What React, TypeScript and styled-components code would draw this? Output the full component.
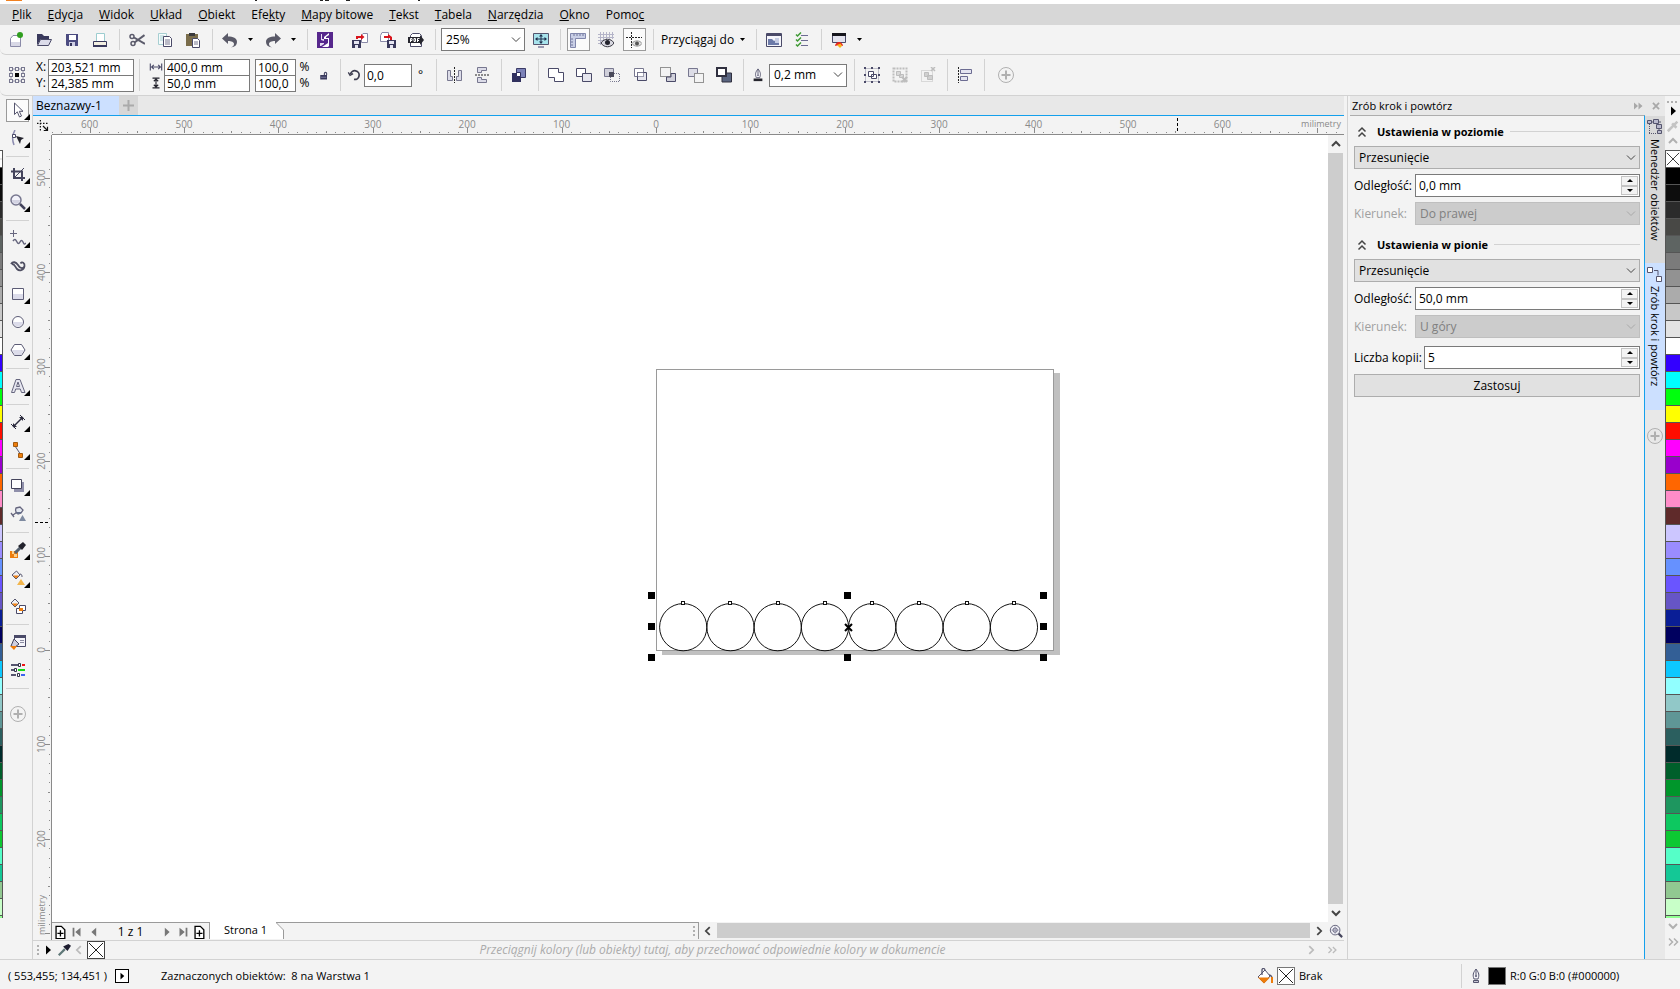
import React, { useId } from "react";
import styled, { createGlobalStyle, css } from "styled-components";

/* ---------- theme values ---------- */
const ink = "#4a4a68";
const line = "#d2d2d2";
const accent = "#14a0ec";
const orange = "#ee7d0c";
const bg = "#f3f3f3";

const Global = createGlobalStyle`
  *, *::before, *::after { box-sizing: border-box; }
  body { margin: 0; background: ${bg}; }
  body, button, input, select {
    font-family: "Open Sans", "Noto Sans", sans-serif;
    font-size: 12px;
    line-height: 16px;
    color: #000;
  }
  button, input, select { margin: 0; border-radius: 0; }
  button { padding: 0; border: 0; background: none; }
  svg { display: block; flex: none; }
`;

/* ---------- icons ---------- */
const Grey = ({ children }: { children: React.ReactNode }) => <g stroke="#bdbdbd" fill="none">{children}</g>;

const icons: Record<string, React.ReactNode> = {
  new: (
    <>
      <path d="M2.500 6.500 5 3.500h7.500V14.500h-10z" fill="#fff" stroke="#8a8aa8" />
      <path d="M3 10h9v4H3z" fill="#d8d8e6" />
      <circle cx="12" cy="3" r="3" fill="#2f9e1e" />
    </>
  ),
  open: (
    <>
      <path d="M1 13V2h5l2 2h5v3H5z" fill="#39395c" />
      <path d="M4.500 7.500h11L12.500 13.500h-11z" fill="#dcdcea" stroke={ink} />
    </>
  ),
  save: (
    <>
      <path d="M2 2h12v12H3l-1-1z" fill="#4b4b80" />
      <path d="M5 3h7v5H5z" fill="#fff" />
      <path d="M5 10h6v4H5z" fill="#cfcfe4" />
      <path d="M6 11h2v3H6z" fill="#33335a" />
    </>
  ),
  print: (
    <>
      <path d="M4.500 1.500h8v8h-8z" fill="#fff" stroke="#9ccdd0" />
      <path d="M1.500 9.500h13v4h-13z" fill="#f3f0e2" stroke="#39395c" />
      <path d="M1 13h14v2H1z" fill="#39395c" />
    </>
  ),
  cut: (
    <g fill="none" stroke="#5c5c6c">
      <circle cx="3" cy="4.500" r="2" strokeWidth="1.500" />
      <circle cx="4" cy="11.500" r="2" strokeWidth="1.500" />
      <path d="M5 5.500 16 12M5.500 10.500 15.500 3" strokeWidth="2" />
    </g>
  ),
  copy: (
    <>
      <path d="M1.500 1.500h8v11h-8z" fill="#f4fbfb" stroke="#a7cfd2" />
      <path d="M3 4h4M3 6h3M3 8h3" stroke="#a7cfd2" />
      <path d="M6.500 4.500h6l2 2v8h-8z" fill="#fff" stroke={ink} />
      <path d="M8 8h5M8 10h5M8 12h5" stroke="#77778f" />
    </>
  ),
  paste: (
    <>
      <path d="M1 2h12v12H1z" fill="#7a6d4b" />
      <path d="M4 1h6v3H4z" fill="#39393c" />
      <path d="M7.500 6.500h5l2 2v7h-7z" fill="#fff" stroke={ink} />
      <path d="M9 10h4M9 12h4" stroke="#77778f" />
    </>
  ),
  undo: <path d="M0 6.500 6 1v3.500c5 0 9 1.500 9 5.500 0 3-2 5-6 5.500 2-1 3-2 3-3.500 0-2-2.500-3-6-3V12z" fill="#5a5a68" />,
  redo: <path d="M16 6.500 10 1v3.500c-5 0-9 1.500-9 5.500 0 3 2 5 6 5.500-2-1-3-2-3-3.500 0-2 2.500-3 6-3V12z" fill="#5a5a68" />,
  connect: (
    <>
      <path d="M0 0h16v16H0z" fill="#56278c" />
      <path d="M12 1 7 5v2h4v4l-6 4h6l1-1V6H9V5l3-2z" fill="#fff" />
      <path d="M4 2h1v5h2v2L4 8zM3 11h4v1L4 14H3z" fill="#e6dcf2" />
    </>
  ),
  import: (
    <>
      <path d="M9.500 3.500 11 1.500h4.500v9h-6z" fill="#fff" stroke="#8a8aa8" />
      <path d="M0 8h9v8H0z" fill="#39395c" />
      <path d="M2 9h5v3H2zM3 13h3v3H3z" fill="#e6e6f2" />
      <path d="M4 7V4h5V2l3.500 3L9 8V6H6v1z" fill="#d8141c" />
    </>
  ),
  export: (
    <>
      <path d="M.5 3.500 2 .5h6.500v9h-8z" fill="#fff" stroke="#8a8aa8" />
      <path d="M7 8h9v8H7z" fill="#39395c" />
      <path d="M9 9h5v3H9zM10 13h3v3h-3z" fill="#e6e6f2" />
      <path d="M4 4h4V2l4 3v3h-2V6H4z" fill="#d8141c" />
    </>
  ),
  pdf: (
    <>
      <path d="M2.500 14.500v-11l2-2h7l2 2v11z" fill="#fff" stroke={ink} />
      <path d="M0 5h12V3l4 5-4 5v-2H0z" fill="#26262e" />
      <path d="M2.500 10V6.500h1.500v2H2.500M6 6.500v3h1.500v-3zM9.500 10V6.500h2M9.500 8.500h1.500" fill="none" stroke="#fff" />
    </>
  ),
  fullscreen: (
    <>
      <path d="M.5 1.500h15v11H.5z" fill="#a7e3ec" stroke="#55556e" />
      <path d="M5 15h6" stroke="#9a9ab2" strokeWidth="2" />
      <path d="M8 3v8M3 7h10" stroke="#1e2f4c" strokeWidth="1" />
      <path d="M8 2 6 4.500h4zM8 12 6 9.500h4zM2 7l2.500-2v4zM14 7l-2.500-2v4z" fill="#1e2f4c" />
    </>
  ),
  rulers: (
    <>
      <path d="M.5 1.500h15v5h-10v9h-5z" fill="#c9cfe6" stroke="#8187ac" />
      <path d="M4 2v2M7 2v2M10 2v2M13 2v2M1 7h2M1 10h2M1 13h2" stroke="#6e7499" />
    </>
  ),
  grid: (
    <>
      <path d="M0 2.500h16M0 5.500h16M0 8.500h5M0 11.500h4M2.500 0v13M5.500 0v9M8.500 0v7M11.500 0v7M14.500 0v7" stroke="#b4b4c8" />
      <path d="M3 11c3-5 10-5 13 0-3 5-10 5-13 0z" fill="#d8d8e0" stroke="#33333f" />
      <circle cx="9.500" cy="10.500" r="2.500" fill="#22222c" />
    </>
  ),
  guides: (
    <>
      <path d="M5.500 0v16M0 5.500h16" stroke="#222" strokeDasharray="2 1" />
      <path d="M6 11.500c2-3.500 8-3.500 10 0-2 3.500-8 3.500-10 0z" fill="#e0e0e0" stroke="#999" />
      <circle cx="11" cy="11.500" r="2" fill="#555" />
    </>
  ),
  launcher: (
    <>
      <path d="M.5 1.500h15v13H.5z" fill="#f5f5fb" stroke={ink} />
      <path d="M1 1h14v3H1z" fill={ink} />
      <path d="M2 7h4l2 2 5-3v7H2z" fill="#6c7aa8" />
      <path d="M9 6h4v5H9z" fill="#c6cde4" />
    </>
  ),
  options: (
    <>
      <path d="M7 3.500h7M7 8.500h7M7 13.500h7" stroke="#6c6c92" />
      <path d="m2 2.500 1.500 1.500L7 .5M2 7.500 3.500 9 7 5.500M2 12.500 3.500 14 7 10.500" fill="none" stroke="#3f9a34" strokeWidth="1.500" />
    </>
  ),
  welcome: (
    <>
      <path d="M1.500 1.500h13v9h-13z" fill="#e3e3ee" stroke={ink} />
      <path d="M1 1h14v3H1z" fill="#15151c" />
      <path d="M4 14c0-2 2-4 4-4s4 2 4 4l-4-1z" fill="#e8261a" />
      <path d="M6 13 9.500 11.500 11 14l-2 2z" fill="#f8b51c" />
    </>
  ),
  origin: (
    <>
      <path d="M3 2h10M3 14h10M2 3v10M14 3v10" stroke="#8c8ca2" />
      <g fill={bg} stroke="#77778f">
        {[0.5, 6.5, 12.5].map((x) => [0.5, 6.5, 12.5].map((y) => <rect key={`${x}-${y}`} x={x} y={y} width="3" height="3" />))}
      </g>
      <path d="M6 6h4v4H6z" fill="#000" />
    </>
  ),
  lock: (
    <>
      <path d="M3 8h9v6H3z" fill="#39395c" />
      <path d="M8.500 8V6c0-2 3-2 3 0v2" fill="none" stroke={ink} strokeWidth="1.500" />
      <path d="M4 11h7" stroke="#8c8cb0" />
    </>
  ),
  rotate: (
    <g fill="none" stroke="#3d3d50" strokeWidth="2">
      <path d="M4 7a5 5 0 1 1 4 6" />
      <path d="m1.500 5 2 3.500L7 6.500" strokeWidth="1.500" />
    </g>
  ),
  width: <path d="M1.500 4v8M14.500 4v8M3 8h10M5.500 5.500 3 8l2.500 2.500M10.500 5.500 13 8l-2.500 2.500" fill="none" stroke={ink} strokeWidth="1.300" />,
  height: <path d="M4 2.500h8M4 13.500h8M8 3v10M5.500 6 8 3.500 10.500 6M5.500 10 8 12.500l2.500-2.500" fill="none" stroke="#22222c" strokeWidth="1.300" />,
  mirrorH: (
    <>
      <path d="M1.500 3.500h3v6h2v4h-5z" fill="#dcdce8" stroke="#77778f" />
      <path d="M15.500 3.500h-3v6h-2v4h5z" fill="#dcdce8" stroke="#77778f" />
      <path d="M8.500 0v16" stroke="#222" strokeDasharray="2 1" />
    </>
  ),
  mirrorV: (
    <>
      <path d="M3.500 .5h9v3h-5v2h-4zM3.500 15.500h9v-3h-5v-2h-4z" fill="#dcdce8" stroke="#77778f" />
      <path d="M1 8h15" stroke="#222" strokeDasharray="2 1" />
    </>
  ),
  order: (
    <>
      <path d="M5.500 1.500h9v9h-9z" fill="#7c82b8" stroke="#3a3a66" />
      <path d="M1 6h9v9H1z" fill="#30305e" />
      <path d="M5.500 5.500h4v4h-4z" fill="#fff" stroke="#30305e" />
    </>
  ),
  weld: <path d="M.5 1.500h10v4h5v9h-9v-4h-6z" fill="#fff" stroke={ink} />,
  trim: (
    <>
      <path d="M.5 1.500h9v8h-9z" fill="#fff" stroke={ink} />
      <path d="M6.500 6.500h9v8h-9z" fill="#e6e6ee" stroke={ink} />
    </>
  ),
  intersect: (
    <>
      <path d="M.5 1.500h9v8h-9z" fill="#d0d0da" stroke="#77778f" />
      <path d="M5 5h5v5H5z" fill="#4a4a5a" />
      <path d="M10 6.500h5.500v8h-9V10" fill="none" stroke="#77778f" strokeDasharray="1 1" />
    </>
  ),
  simplify: (
    <>
      <path d="M2.500 1.500h9v8h-9z" fill="#fff" stroke="#77778f" />
      <path d="M5.500 5.500h9v8h-9z" fill="#e6e6ee" stroke={ink} />
      <path d="M5.500 5.500h6v4h-6z" fill="#fff" stroke={ink} strokeDasharray="1 1" />
    </>
  ),
  frontBack: (
    <>
      <path d="M.5 .5h10v9H.5z" fill="none" stroke="#333" strokeDasharray="1 1" />
      <path d="M11 6.500h4.500v8h-9V10H11z" fill="#d0d0da" stroke={ink} />
    </>
  ),
  backFront: (
    <>
      <path d="M9.500 6V1.500h-9v8H6" fill="#dcdce6" stroke="#77778f" />
      <path d="M6.500 6.500h9v9h-9z" fill={bg} stroke="#333" strokeDasharray="1 1" />
    </>
  ),
  boundary: (
    <>
      <path d="M6 6h9.500v9H6z" fill="#5a6580" stroke="#30303f" />
      <path d="M1 1h9v8H1z" fill="#fff" stroke="#30303f" strokeWidth="2" />
    </>
  ),
  pen: (
    <>
      <path d="M8 1c3 4 3.500 6 2 10H6C4.500 7 5 5 8 1z" fill="#f4f4f8" stroke="#55556e" />
      <path d="M8 2v5" stroke="#55556e" />
      <circle cx="8" cy="8" r="1" fill="#55556e" />
      <path d="M3 12h10v3H3z" fill="#26262e" />
    </>
  ),
  nib: (
    <>
      <path d="M8 1c3 4 3.500 6 2 10H6C4.500 7 5 5 8 1z" fill="#f4f4f8" stroke="#55556e" />
      <path d="M8 2v5" stroke="#55556e" />
      <circle cx="8" cy="8" r="1" fill="#55556e" />
      <path d="M5.500 12.500h5v2h-5z" fill="#c9c9d6" stroke="#55556e" />
    </>
  ),
  group: (
    <>
      <path d="M1.500 1.500h13v13h-13z" fill="none" stroke="#8c8ca2" strokeDasharray="1 1" />
      <path d="M0 0h2v2H0zM14 0h2v2h-2zM0 14h2v2H0zM14 14h2v2h-2zM7 0h2v2H7zM7 14h2v2H7zM0 7h2v2H0zM14 7h2v2h-2z" fill={ink} />
      <path d="M4.500 4.500h5v5h-5zM7.500 7.500h5v4h-5z" fill="#fff" stroke={ink} />
    </>
  ),
  ungroup: (
    <Grey>
      <path d="M1.500 1.500h13v13h-13z" strokeDasharray="2 1" strokeWidth="2" />
      <path d="M4.500 4.500h4v4h-4zM7.500 7.500h4v3h-4z" fill="#d8d8d8" />
      <path d="m10 10 5 5m0-5-5 5" strokeWidth="2" />
    </Grey>
  ),
  ungroupAll: (
    <Grey>
      <path d="M1.500 3.500h11v11h-11z" strokeDasharray="1 1" />
      <path d="M4.500 5.500h4v4h-4zM7.500 8.500h5v4h-5z" fill="#d0d0d0" />
      <path d="m11 0 4 4m0-4-4 4" strokeWidth="1.500" />
    </Grey>
  ),
  align: (
    <>
      <path d="M1.500 0v16" stroke="#222" strokeDasharray="2 1" />
      <path d="M3.500 2.500h11v4h-11zM3.500 9.500h7v4h-7z" fill="#e4e4f0" stroke="#6c6c92" />
    </>
  ),
  pick: <path d="M4.500 1v11.500l2.800-2.700L9.500 15l2-1-2.200-4.700H13z" fill="#fff" stroke="#55556e" />,
  shape: (
    <>
      <path d="M5 0C2 5 2 10 4 15" fill="none" stroke="#8c8cb0" strokeWidth="1.500" />
      <path d="M2.500 4.500h3v3h-3z" fill="#fff" stroke={ink} />
      <path d="m6 6 8 2-3 2-1 4z" fill="#22222c" />
    </>
  ),
  crop: (
    <g fill="none" stroke="#44445c" strokeWidth="2">
      <path d="M4 2v10h11M1 5.500h11V15" />
      <path d="m14 2-9 9" strokeWidth="1" />
    </g>
  ),
  zoom: (
    <>
      <circle cx="6" cy="6" r="5" fill="#f2f2fa" stroke="#77778f" strokeWidth="1.500" />
      <path d="M2 6h8c0 5-8 5-8 0z" fill="#d3d3e2" />
      <path d="m10 10 5 5" stroke="#44445c" strokeWidth="2.500" />
    </>
  ),
  freehand: (
    <g fill="none" stroke="#66667e">
      <path d="M3.500 0v7M0 3.500h7" />
      <path d="M3 11c2-3 3-1 4 1s2 2 3 0 2-2 3 0 1 3 3 1" strokeWidth="1.500" />
    </g>
  ),
  artistic: (
    <path
      d="M1 6c2-3 5-2 7 1 2 4 6 4 6.500 1C15 5 12 3 10.500 5.500M2 6c3 0 3 3 5 5s7 2 7.500-3"
      fill="none"
      stroke="#4f4f62"
      strokeWidth="1.800"
    />
  ),
  rect: (
    <>
      <path d="M2.500 2.500h11v11h-11z" fill="#fff" stroke="#5c5c76" />
      <path d="M3 8h10v5H3z" fill="#dcdcea" />
    </>
  ),
  ellipse: (
    <>
      <circle cx="8" cy="8" r="5.500" fill="#fff" stroke="#5c5c76" />
      <path d="M3 8h10c-1 6-9 6-10 0z" fill="#dcdcea" />
    </>
  ),
  polygon: (
    <>
      <path d="M4.500 2.500h7l3.500 5.500-3.500 5.500h-7L1 8z" fill="#fff" stroke="#5c5c76" />
      <path d="M2 8h12l-3 5H5z" fill="#dcdcea" />
    </>
  ),
  text: <path d="M1.500 14.500 6 1.500h4l5 13h-3.500L10.300 11H5.700L4.500 14.500zM6.500 8.500h3L8 4z" fill="#e6e6f0" stroke="#66667e" />,
  dimension: (
    <g stroke="#2c2c3e" fill="#2c2c3e">
      <path d="m3 13 10-10" strokeWidth="1.500" />
      <path d="m1 10 5 5M10 1l5 5" />
      <path d="M3 13V9l4 4zM13 3v4L9 3z" stroke="none" />
    </g>
  ),
  connector: (
    <>
      <path d="m5 4 6 9" stroke="#55556e" />
      <path d="M3.500 .5h4v4h-4zM8.500 11.500h4v4h-4z" fill={orange} stroke="#a05a10" />
    </>
  ),
  shadow: (
    <>
      <path d="M4 4h10v10H4z" fill="#8f8faa" />
      <path d="M1.500 1.500h10v9h-10z" fill="#fff" stroke="#44445c" />
    </>
  ),
  transparency: (
    <>
      <path d="m6 2 4-1 3 3-2 3-3 1c-2-1-3-3-2-6z" fill="#e4e8f0" stroke="#66667e" strokeWidth="1.300" />
      <path d="M6 6h6l-2 2H7z" fill="#66708c" />
      <path d="M6.500 6.500 3 9M1 7l3 4" stroke="#66667e" strokeWidth="1.300" />
      <path d="M9 15 12.500 9l3.500 6z" fill="#7e8aa0" />
    </>
  ),
  eyedropper: (
    <>
      <path d="M0 9h8v7H0z" fill={orange} />
      <path d="M2 9h2v3H2zM4 12h3v3H4z" fill="#fbd08c" />
      <path d="m5 11 6-6" stroke="#55606e" strokeWidth="3" />
      <path d="m8 4 4 4 4-5-3-3z" fill="#22222c" />
    </>
  ),
  fillTool: (
    <>
      <path d="M2 5 6.500 1 10 5 6 9z" fill="#f0f0f4" stroke="#55556e" />
      <path d="M3 5.500h6L6 8.500z" fill={orange} />
      <path d="M10 4c2 0 2 2 2 3" fill="none" stroke="#55556e" />
      <path d="M7 15 11 9l4 6z" fill="#f2b54c" />
    </>
  ),
  smartFill: (
    <>
      <path d="M1 5 5 1l4 4-4 4z" fill="#f0f0f4" stroke="#55556e" />
      <path d="M2 5.500h6L5 8.500z" fill={orange} />
      <path d="M9.500 7.500h6v5h-6zM6.500 10.500h6v5h-6z" fill="#fff" stroke={ink} />
      <path d="M9 10h4v3H9z" fill={orange} />
    </>
  ),
  properties: (
    <>
      <path d="M4.500 1.500h11v11h-11z" fill="#f4f4fa" stroke={ink} />
      <path d="M4 1h12v3H4z" fill={ink} />
      <path d="M10 6.500h4M10 8.500h4" stroke="#8c8ca2" />
      <path d="m4 5 5 5-4 3-4-1z" fill="#cfcfe0" stroke="#44445c" />
      <path d="M0 12h7l-3 4z" fill={orange} />
    </>
  ),
  colorSliders: (
    <>
      <path d="M1 3h7M1 8h3M1 13h5" stroke="#55556e" strokeWidth="2" />
      <path d="M12 3h3" stroke="#f01414" strokeWidth="2" />
      <path d="M8 8h7" stroke="#14d814" strokeWidth="2" />
      <path d="M11 13h4" stroke="#3c64f0" strokeWidth="2" />
      <path d="M8.500 1.500h2v3h-2zM4.500 6.500h2v3h-2zM7.500 11.500h2v3h-2z" fill="#fff" stroke="#33334a" />
    </>
  ),
  plus: (
    <g fill="none" stroke="#b0b0b0">
      <circle cx="8" cy="8" r="7.500" />
      <path d="M8 3.500v9M3.500 8h9" strokeWidth="2" />
    </g>
  ),
  addPage: (
    <>
      <path d="M3.500 1.500h6l4 4v10h-10z" fill="#fff" stroke="#000" strokeWidth="1.500" />
      <path d="M8.500 6v7M5 9.500h7" stroke="#000" strokeWidth="1.500" />
    </>
  ),
  first: <path d="M3 3h2v10H3zM12 3v10L6 8z" fill="#777" />,
  prev: <path d="M10.500 3v10L5 8z" fill="#777" />,
  next: <path d="M5.500 3v10L11 8z" fill="#777" />,
  last: <path d="M11 3h2v10h-2zM4 3v10l6-5z" fill="#777" />,
  play: <path d="M6 3.500v9L11 8z" fill="#000" />,
  dropper: (
    <>
      <path d="m2 14 7-7" stroke="#5f7878" strokeWidth="2.500" />
      <path d="m7 4 5 5 4-6-3-2z" fill="#1e1e30" />
    </>
  ),
  dropperOff: <path d="m2 14 7-7M7 5l5 5M9 7l4-4" stroke="#c4c4c4" strokeWidth="3" fill="none" />,
  chevL: <path d="M10 3.500 5.500 8l4.500 4.500" fill="none" stroke="currentColor" strokeWidth="2" />,
  chevR: <path d="M6 3.500 10.500 8 6 12.500" fill="none" stroke="currentColor" strokeWidth="2" />,
  chevU: <path d="M4 10l4-4 4 4" fill="none" stroke="currentColor" strokeWidth="2" />,
  chevD: <path d="M4 6l4 4 4-4" fill="none" stroke="currentColor" strokeWidth="2" />,
  dblR: <path d="m4 4.500 3.500 3.500L4 11.500M9 4.500l3.500 3.500L9 11.500" fill="none" stroke="currentColor" strokeWidth="1.500" />,
  dblU: <path d="m4.500 7.500 3.500-3.500 3.500 3.500M4.500 12.500 8 9l3.500 3.500" fill="none" stroke="#444" strokeWidth="1.500" />,
  skip: <path d="M4 4.500v7L8 8zM8.500 4.500v7l4-3.500z" fill="#a8a8a8" />,
  close: <path d="m4.500 4.500 7 7m0-7-7 7" stroke="#a8a8a8" strokeWidth="2" />,
  navigator: (
    <>
      <circle cx="7" cy="7" r="5.500" fill="#f2f2f8" stroke="#55556e" />
      <circle cx="7" cy="7" r="2.500" fill="none" stroke="#55556e" />
      <path d="M7 3v8M3 7h8" stroke="#8c8ca2" />
      <path d="m11 11 4 4" stroke="#44445c" strokeWidth="2.500" />
    </>
  ),
  bucket: (
    <>
      <path d="m1 9 7-7 5 6-6 7z" fill="#fff" stroke="#55556e" />
      <path d="M1 9.500h12l-6 6z" fill={orange} />
      <path d="M5 7V1.500c1-2 3-1 3 1M12 7c3 0 3.500 3 3 7" fill="none" stroke="#55556e" strokeWidth="1.300" />
      <path d="M15 9v6" stroke={orange} strokeWidth="2" />
    </>
  ),
  manager: (
    <>
      <path d="M2.500 5v10M2 14.500h8M5 3h4" stroke="#55556e" strokeDasharray="1 1" fill="none" />
      <path d="M.5 1.500h4v3h-4zM6.500 .5h5v4h-5zM9.500 5.500h5v4h-5zM10.500 11.500h4v3h-4z" fill="#b9b9cc" stroke="#55556e" />
      <path d="M12 3h2M12 10v2" stroke="#55556e" />
    </>
  ),
  step: (
    <>
      <path d="M.5 1.500h5v5h-5zM9.500 10.500h5v5h-5z" fill="#fff" stroke="#55556e" />
      <path d="M7 4.500h4v5" fill="none" stroke="#55556e" />
    </>
  ),
  anchor: (
    <>
      <path d="M4.500 0v16M0 4.500h16" stroke="#111" strokeWidth="1.600" strokeDasharray="2 2" />
      <path d="m8 8 6 6M14 9v5H9" fill="none" stroke="#111" strokeWidth="1.600" />
    </>
  ),
};

const Icon = ({ name, size = 16 }: { name: string; size?: number }) => (
  <svg width={size} height={size} viewBox="0 0 16 16" aria-hidden="true">
    {icons[name]}
  </svg>
);

/* ---------- frame ---------- */
const Shell = styled.div`
  display: flex;
  flex-direction: column;
  height: 100vh;
  overflow: hidden;
  background: ${bg};
`;

const TitleStrip = styled.div`
  flex: none;
  height: 4px;
  background: #fff;
`;

const MenuBar = styled.nav`
  flex: none;
  display: flex;
  align-items: center;
  height: 21px;
  padding-left: 4px;
  background: #d7d7d7;
`;

const MenuItem = styled.button`
  padding: 0 8px;
  height: 21px;
  white-space: nowrap;
  u { text-underline-offset: 1px; }
`;

const Bar = styled.div<{ $h: number }>`
  flex: none;
  display: flex;
  align-items: center;
  height: ${(p) => p.$h}px;
  border-bottom: 1px solid ${line};
  border-bottom-left-radius: 6px;
`;

const StandardBar = styled(Bar)`
  padding-left: 2px;
`;

const PropertyBar = styled(Bar)`
  padding-left: 3px;
`;

const Sep = styled.span`
  flex: none;
  align-self: stretch;
  width: 9px;
  margin: 4px 0;
  background: linear-gradient(${line}, ${line}) 5px 0 / 1px 100% no-repeat;
`;

const Gap = styled.span<{ $w: number }>`
  flex: none;
  width: ${(p) => p.$w}px;
`;

const Tool = styled.button<{ $w?: number }>`
  flex: none;
  display: flex;
  align-items: center;
  justify-content: center;
  width: ${(p) => p.$w ?? 28}px;
  height: 28px;
`;

const Pressed = styled.span`
  display: flex;
  align-items: center;
  justify-content: center;
  width: 23px;
  height: 23px;
  border: 1px solid #9a9a9a;
  background: #fbfbfb;
`;

const CaretBox = styled.button`
  flex: none;
  width: 12px;
  height: 28px;
  margin-right: 3px;
  display: flex;
  align-items: center;
  justify-content: center;
`;

const Caret = ({ label }: { label: string }) => (
  <CaretBox aria-label={label}>
    <svg width="7" height="4" viewBox="0 0 7 4"><path d="M1 0h5L3.500 3z" fill="#000" /></svg>
  </CaretBox>
);

const SnapButton = styled.button`
  margin: 0 2px 0 4px;
  min-width: 70px;
  height: 28px;
  text-align: left;
  white-space: nowrap;
`;

const tones = {
  edit: css`background: #fff; border: 1px solid #7a7a7a;`,
  list: css`background: #e1e1e1; border: 1px solid #adadad;`,
  off: css`background: #cccccc; border: 1px solid #bfbfbf; color: #808080;`,
};

const SelectBox = styled.span<{ $w?: number }>`
  position: relative;
  display: flex;
  align-items: center;
  ${(p) => (p.$w ? `flex: none; width: ${p.$w}px;` : "flex: 1; min-width: 0;")}
  height: 23px;
  svg { position: absolute; right: 4px; pointer-events: none; }
`;

const SelectField = styled.select<{ $tone: keyof typeof tones }>`
  appearance: none;
  width: 100%;
  height: 23px;
  padding: 0 18px 0 4px;
  opacity: 1;
  ${(p) => tones[p.$tone]}
`;

const Select = ({ value, label, w, tone = "edit", id }: { value: string; label?: string; w?: number; tone?: keyof typeof tones; id?: string }) => (
  <SelectBox $w={w}>
    <SelectField id={id} aria-label={label} $tone={tone} disabled={tone === "off"} defaultValue={value}>
      <option>{value}</option>
    </SelectField>
    <svg width="10" height="6" viewBox="0 0 10 6">
      <path d="m1 .5 4 4 4-4" fill="none" stroke={tone === "off" ? "#a8a8a8" : "#444"} />
    </svg>
  </SelectBox>
);

const Pair = styled.div<{ $cols: string }>`
  flex: none;
  display: grid;
  grid-template-columns: ${(p) => p.$cols};
  grid-template-rows: 16px 17px;
  align-items: center;
  justify-items: center;
`;

const NumField = styled.input<{ $w?: number; $h?: number }>`
  width: ${(p) => (p.$w ? `${p.$w}px` : "100%")};
  height: ${(p) => p.$h ?? 17}px;
  padding: 0 2px;
  border: 1px solid #7a7a7a;
  background: #fff;
  align-self: start;
`;

const AngleField = styled(NumField)`
  align-self: center;
`;

const Degree = styled.span`
  width: 19px;
  padding-left: 6px;
`;

/* ---------- main area ---------- */
const Main = styled.main`
  flex: 1;
  min-height: 0;
  display: flex;
`;

const EdgePalette = styled.div`
  flex: none;
  width: 3px;
  padding-top: 54px;
`;

const Toolbox = styled.aside`
  flex: none;
  width: 30px;
  display: flex;
  flex-direction: column;
  align-items: center;
  border-right: 1px solid ${line};
`;

const BoxTool = styled.button`
  position: relative;
  flex: none;
  width: 28px;
  height: 28px;
  display: flex;
  align-items: center;
  justify-content: center;
`;

const AddTool = styled(BoxTool)`
  ${Toolbox} & { margin-top: 8px; }
`;

const Flyout = styled.i`
  position: absolute;
  right: 2px;
  bottom: 4px;
  border: 3px solid #000;
  border-top-color: transparent;
  border-left-color: transparent;
`;

const BoxRule = styled.hr`
  flex: none;
  width: 23px;
  height: 8px;
  margin: 0;
  border: 0;
  background: linear-gradient(${line}, ${line}) 0 4px / 100% 1px no-repeat;
`;

const Document = styled.section`
  flex: 1;
  min-width: 0;
  display: flex;
  flex-direction: column;
`;

const TabRow = styled.div`
  flex: none;
  display: flex;
  height: 20px;
  background: #e8e8e8;
  border-bottom: 1px solid ${accent};
`;

const DocTab = styled.button<{ $add?: boolean }>`
  width: ${(p) => (p.$add ? 19 : 86)}px;
  padding-left: 3px;
  background: ${(p) => (p.$add ? "#d7d7d7" : "#cce0ff")};
  text-align: left;
  white-space: nowrap;
`;

const Workspace = styled.div`
  flex: 1;
  min-height: 0;
  display: grid;
  grid-template-columns: 19px minmax(0, 1fr) 16px;
  grid-template-rows: 19px minmax(0, 1fr) 18px;
`;

const Corner = styled.div`
  display: flex;
  align-items: center;
  justify-content: center;
`;

const TopRuler = styled.svg`
  grid-column: 2 / 4;
  width: 100%;
  height: 19px;
`;

const SideRuler = styled.svg`
  grid-row: 2 / 4;
  grid-column: 1;
  width: 19px;
  height: 100%;
`;

const RulerText = styled.text<{ $unit?: boolean }>`
  font: ${(p) => (p.$unit ? 9 : 10)}px "Open Sans", sans-serif;
  fill: #8a8a8a;
`;

const Canvas = styled.svg`
  width: 100%;
  height: 100%;
  background: #fff;
`;

const VScroll = styled.div`
  display: flex;
  flex-direction: column;
  width: 15px;
  color: #444;
`;

const HScroll = styled.div`
  flex: 1;
  display: flex;
  height: 15px;
  margin-top: 1px;
  color: #444;
`;

const Thumb = styled.div`
  flex: 1;
  background: #cdcdcd;
`;

const ScrollButton = styled.button`
  flex: none;
  width: 16px;
  height: 18px;
  display: flex;
  align-items: center;
  justify-content: center;
  color: inherit;
  ${HScroll} & { width: 18px; height: 15px; }
  ${VScroll} & { width: 15px; }
`;

const PageBar = styled.div`
  display: flex;
  min-width: 0;
`;

const PageNav = styled.div`
  flex: none;
  display: flex;
  align-items: center;
  width: 157px;
  border-top: 1px solid #9a9a9a;
`;

const PageCount = styled.span`
  width: 57px;
  text-align: center;
`;

const NavButton = styled.button<{ $w: number }>`
  flex: none;
  width: ${(p) => p.$w}px;
  display: flex;
  justify-content: center;
  color: inherit;
`;

const PageTab = styled.button`
  flex: none;
  display: flex;
  width: 75px;
  height: 17px;
  padding-left: 14px;
  justify-content: space-between;
  border-left: 1px solid #9a9a9a;
  background: #fff;
  font-size: 11px;
  line-height: 16px;
  white-space: nowrap;
`;

const PageRest = styled.div`
  flex: none;
  display: flex;
  align-items: center;
  justify-content: flex-end;
  width: 415px;
  padding-right: 3px;
  height: 17px;
  border: solid #9a9a9a;
  border-width: 1px 1px 0 0;
`;

const Dots = styled.i<{ $row?: boolean }>`
  flex: none;
  width: ${(p) => (p.$row ? 11 : 2)}px;
  height: ${(p) => (p.$row ? 2 : 11)}px;
  background: repeating-linear-gradient(${(p) => (p.$row ? "90deg" : "180deg")}, #b0b0b0 0 2px, transparent 2px 4px);
`;

const Tray = styled.div`
  flex: none;
  display: flex;
  align-items: center;
  height: 19px;
  padding-left: 4px;
  border-top: 1px solid ${line};
  color: #bcbcbc;
`;

const TrayHint = styled.p`
  flex: 1;
  margin: 0;
  padding-left: 18px;
  text-align: center;
  font-style: italic;
  color: #ababab;
`;

const NoColor = styled.span`
  flex: none;
  width: 18px;
  height: 18px;
  border: 1px solid #444;
  background: #fff;
`;

const Cross = () => (
  <svg width="100%" height="100%" viewBox="0 0 16 16"><path d="m1 1 14 14M15 1 1 15" stroke="#222" /></svg>
);

/* ---------- docker ---------- */
const Dock = styled.aside`
  flex: none;
  display: flex;
  flex-direction: column;
  width: 318px;
  padding-left: 2px;
  border-left: 1px solid ${line};
  margin-left: 3px;
  background: ${bg};
`;

const DockHead = styled.header`
  flex: none;
  display: flex;
  align-items: center;
  height: 20px;
  padding-left: 2px;
  background: #e8e8e8;
  h2 { flex: 1; margin: 0; font-size: 11px; font-weight: 400; }
`;

const DockBody = styled.div`
  flex: 1;
  min-height: 0;
  display: flex;
`;

const Form = styled.form`
  flex: 1;
  padding: 1px 4px 0;
  border-top: 1px solid #adadad;
  border-right: 1px solid ${accent};
  margin-top: -1px;
`;

const GroupHead = styled.h3`
  display: flex;
  align-items: center;
  height: 29px;
  margin: 0;
  font-size: 11px;
  font-weight: 700;
  white-space: nowrap;
  &::after { content: ""; flex: 1; margin-left: 6px; height: 1px; background: ${line}; }
  svg { margin-right: 7px; }
`;

const FieldRow = styled.div<{ $last?: boolean }>`
  display: flex;
  align-items: center;
  height: 23px;
  margin: ${(p) => (p.$last ? 8 : 0)}px 0 5px;
`;

const FieldLabel = styled.label<{ $w: number; $off?: boolean }>`
  flex: none;
  width: ${(p) => p.$w}px;
  color: ${(p) => (p.$off ? "#a0a0a0" : "#000")};
  white-space: nowrap;
`;

const SpinBox = styled.span`
  flex: 1;
  min-width: 0;
  display: flex;
  height: 23px;
  padding: 1px;
  border: 1px solid #7a7a7a;
  background: #fff;
  input { flex: 1; min-width: 0; border: 0; padding: 0 2px; background: none; }
`;

const SpinButtons = styled.span`
  display: grid;
  width: 17px;
  grid-template-rows: 1fr 1fr;
`;

const SpinButton = styled.button`
  display: flex;
  align-items: center;
  justify-content: center;
  border: 1px solid #c4c4c4;
  background: #f3f3f3;
`;

const Spin = ({ id, value }: { id: string; value: string }) => (
  <SpinBox>
    <input id={id} defaultValue={value} />
    <SpinButtons>
      <SpinButton type="button" aria-label="+"><svg width="6" height="3" viewBox="0 0 6 3"><path d="M0 3 3 0l3 3z" /></svg></SpinButton>
      <SpinButton type="button" aria-label="-"><svg width="6" height="3" viewBox="0 0 6 3"><path d="M0 0h6L3 3z" /></svg></SpinButton>
    </SpinButtons>
  </SpinBox>
);

const Apply = styled.button`
  width: 100%;
  height: 23px;
  border: 1px solid #adadad;
  background: #e1e1e1;
`;

const SideTabs = styled.div`
  flex: none;
  width: 20px;
  display: flex;
  flex-direction: column;
  align-items: center;
  background: #e8e8e8;
  ${AddTool} { margin-top: 12px; }
`;

const SideTab = styled.button<{ $active?: boolean }>`
  flex: none;
  display: flex;
  flex-direction: column;
  align-items: center;
  gap: 4px;
  width: 20px;
  height: 147px;
  padding-top: 3px;
  background: ${(p) => (p.$active ? "#cce0ff" : "#d9d9d9")};
  span { writing-mode: vertical-rl; white-space: nowrap; font-size: 11px; line-height: 18px; }
`;

const PaletteColumn = styled.div`
  flex: none;
  width: 15px;
  display: flex;
  flex-direction: column;
  align-items: center;
  padding-top: 5px;
  color: #b0b0b0;
  overflow: hidden;
`;

const PaletteTop = styled.div`
  flex: none;
  display: flex;
  flex-direction: column;
  align-items: center;
  height: 49px;
`;

const SwatchList = styled.div`
  width: 100%;
  display: flex;
  flex-direction: column;
  border-left: 1px solid #555;
`;

const EdgeList = styled(SwatchList)`
  border-left: 0;
  border-right: 1px solid #555;
`;

const Swatch = styled.button<{ $c: string; $cut?: boolean }>`
  flex: none;
  display: block;
  width: 100%;
  height: ${(p) => (p.$cut ? 3 : 17)}px;
  overflow: hidden;
  border-top: 1px solid #555;
  background: ${(p) => p.$c};
`;

/* ---------- status bar ---------- */
const StatusBar = styled.footer`
  flex: none;
  display: flex;
  align-items: center;
  height: 30px;
  padding: 3px 0 0 8px;
  border-top: 1px solid ${line};
  font-size: 11px;
  white-space: pre;
`;

const Coords = styled.span`
  width: 107px;
`;

const PlayBox = styled.button`
  width: 14px;
  height: 14px;
  margin-right: 32px;
  border: 1px solid #000;
  background: #fff;
  display: flex;
  align-items: center;
  justify-content: center;
`;

const StatusText = styled.span`
  flex: 1;
`;

const StatusCell = styled.span<{ $w: number; $line?: boolean }>`
  flex: none;
  display: flex;
  align-items: center;
  gap: 4px;
  width: ${(p) => p.$w}px;
  height: 24px;
  ${(p) => p.$line && `padding-left: 6px; border-left: 1px solid ${line};`}
`;

const StatusSwatch = styled.span<{ $c: string }>`
  width: 18px;
  height: 18px;
  border: 1px solid #777;
  background: ${(p) => p.$c};
`;

/* ---------- data ---------- */
const menu: [string, string, string][] = [
  ["", "P", "lik"], ["", "E", "dycja"], ["", "W", "idok"], ["", "U", "kład"], ["", "O", "biekt"], ["Efe", "k", "ty"],
  ["", "M", "apy bitowe"], ["", "T", "ekst"], ["", "T", "abela"], ["", "N", "arzędzia"], ["", "O", "kno"], ["Pomo", "c", ""],
];

const palette = [
  "#000000", "#0d0d0d", "#2b2b2b", "#484845", "#5e6462", "#7b7b7b", "#929292", "#ababab", "#c8c8c8", "#e3e3e3", "#ffffff",
  "#3300ff", "#00ffff", "#00ff0d", "#ffff00", "#ff0d00", "#ff00ff", "#9900cc", "#ff6600", "#ff8cc8", "#5f2a2a", "#ccc6ff",
  "#9a8cff", "#6691ff", "#6a55ff", "#6655c6", "#0a1e96", "#00005f", "#335f96", "#0dc8ff", "#91ffff", "#91c8c8", "#5f9696",
  "#2b5f5f", "#002b2b", "#005f2b", "#00962b", "#1e965f", "#0dc860", "#0dc832", "#55ffc8", "#14c896", "#91c891", "#c8ffc8",
];

const toolbox: ("-" | [string, boolean])[] = [
  ["shape", true], "-", ["crop", true], ["zoom", true], "-", ["freehand", true], ["artistic", false], ["rect", true],
  ["ellipse", true], ["polygon", true], "-", ["text", true], "-", ["dimension", true], ["connector", true], "-",
  ["shadow", true], ["transparency", false], "-", ["eyedropper", true], ["fillTool", true], ["smartFill", false], "-",
  ["properties", false], ["colorSliders", false], "-",
];

/* Screen pixels per 10 mm at the current zoom, and where 0 lies on the canvas. */
const step = 9.44;
const zeroX = 604;
const zeroY = 515;

const ticks = (from: number, to: number) => Array.from({ length: to - from + 1 }, (_, i) => from + i);

const HorizontalRuler = () => (
  <TopRuler>
    <g stroke="#8a8a8a" shapeRendering="crispEdges">
      <path d="M0 18.500h4000" />
      {ticks(-64, 74).map((n) => {
        const x = Math.round(zeroX + n * step) + 0.5;
        const len = n % 10 === 0 ? 5 : n % 5 === 0 ? 2 : 1;
        return <path key={n} d={`M${x} ${17 - len}v${len}`} />;
      })}
    </g>
    <path d="M1125.500 2v15" stroke="#000" strokeDasharray="3 2" />
    {ticks(-6, 6).map((n) => (
      <RulerText key={n} x={zeroX + n * 10 * step} y="12" textAnchor="middle">{Math.abs(n * 100)}</RulerText>
    ))}
    <RulerText $unit x="100%" dx="-3" y="11" textAnchor="end">milimetry</RulerText>
  </TopRuler>
);

const VerticalRuler = () => (
  <SideRuler>
    <g stroke="#8a8a8a" shapeRendering="crispEdges">
      <path d="M18.500 0v4000" />
      {ticks(-30, 54).map((n) => {
        const y = Math.round(zeroY - n * step) + 0.5;
        const len = n % 10 === 0 ? 5 : n % 5 === 0 ? 2 : 1;
        return <path key={n} d={`M${17 - len} ${y}h${len}`} />;
      })}
    </g>
    <path d="M2 387.500h15" stroke="#000" strokeDasharray="3 2" />
    {ticks(-2, 5).map((n) => (
      <RulerText key={n} transform={`translate(12 ${zeroY - n * 10 * step}) rotate(-90)`} textAnchor="middle">{Math.abs(n * 100)}</RulerText>
    ))}
    <RulerText $unit transform="translate(12 800) rotate(-90)">milimetry</RulerText>
  </SideRuler>
);

const Drawing = () => (
  <Canvas role="img" aria-label="Strona 1">
    <rect x="610" y="238" width="398" height="282" fill="#c0c0c0" />
    <rect x="604.500" y="234.500" width="397" height="281" fill="#fff" stroke="#9a9a9a" />
    <g fill="none" stroke="#111">
      {ticks(0, 7).map((n) => (
        <g key={n}>
          <circle cx={631.2 + n * 47.25} cy="492.200" r="23.600" />
          <rect x={Math.round(631 + n * 47.25) - 1.5} y="466.500" width="3" height="3" fill="#fff" shapeRendering="crispEdges" />
        </g>
      ))}
    </g>
    {[596, 792, 988].map((x) => [457, 488, 519].map((y) => (x === 792 && y === 488 ? null : <rect key={`${x}-${y}`} x={x} y={y} width="7" height="7" />)))}
    <path d="m793 489 7 7m0-7-7 7" stroke="#000" strokeWidth="2" />
  </Canvas>
);

const Swatches = () => (
  <>
    <Swatch $c="#fff" aria-label="Brak"><Cross /></Swatch>
    {palette.map((c) => <Swatch key={c} $c={c} aria-label={c} />)}
    <Swatch $cut $c="#91ff91" aria-label="#91ff91" />
  </>
);

const Offset = ({ title, distance, direction }: { title: string; distance: string; direction: string }) => {
  const id = useId();
  return (
    <>
      <GroupHead><Icon name="dblU" />{title}</GroupHead>
      <FieldRow><Select value="Przesunięcie" label={title} tone="list" /></FieldRow>
      <FieldRow>
        <FieldLabel $w={61} htmlFor={`${id}d`}>Odległość:</FieldLabel>
        <Spin id={`${id}d`} value={distance} />
      </FieldRow>
      <FieldRow>
        <FieldLabel $w={61} $off htmlFor={`${id}k`}>Kierunek:</FieldLabel>
        <Select id={`${id}k`} value={direction} tone="off" />
      </FieldRow>
    </>
  );
};

const tools = (names: string[]) => names.map((n) => <Tool key={n} aria-label={n}><Icon name={n} /></Tool>);

export default function App() {
  return (
    <Shell>
      <Global />
      <TitleStrip>
        <svg width="440" height="4">
          <path d="M6 0h16v1H6z" fill="#f08020" />
          <path d="M255 0h2v1h-2zM320 0h3v1h-3zM325 0h4v1h-4zM346 0h4v1h-4zM418 0h2v1h-2z" fill="#222" />
        </svg>
      </TitleStrip>
      <MenuBar>
        {menu.map(([a, key, b]) => <MenuItem key={a + key + b}>{a}<u>{key}</u>{b}</MenuItem>)}
      </MenuBar>

      <StandardBar $h={30}>
        {tools(["new", "open", "save", "print"])}
        <Sep />
        {tools(["cut", "copy", "paste"])}
        <Sep />
        {tools(["undo"])}<Caret label="Cofnij" />
        {tools(["redo"])}<Caret label="Ponów" />
        <Sep />
        {tools(["connect"])}
        <Gap $w={7} />
        {tools(["import", "export", "pdf"])}
        <Sep />
        <Gap $w={2} />
        <Select value="25%" label="Powiększenie" w={84} />
        <Gap $w={2} />
        {tools(["fullscreen"])}
        <Sep />
        <Tool aria-label="rulers"><Pressed><Icon name="rulers" /></Pressed></Tool>
        {tools(["grid"])}
        <Tool aria-label="guides"><Pressed><Icon name="guides" /></Pressed></Tool>
        <Sep />
        <SnapButton>Przyciągaj do</SnapButton>
        <Caret label="Przyciągaj do" />
        <Sep />
        {tools(["launcher", "options"])}
        <Sep />
        {tools(["welcome"])}
        <Caret label="Ekran powitalny" />
      </StandardBar>

      <PropertyBar $h={41}>
        {tools(["origin"])}
        <Gap $w={3} />
        <Pair $cols="14px 86px">
          <label htmlFor="x">X:</label><NumField id="x" defaultValue="203,521 mm" />
          <label htmlFor="y">Y:</label><NumField id="y" defaultValue="24,385 mm" />
        </Pair>
        <Sep /><Gap $w={4} />
        <Pair $cols="17px 86px 5px 41px 17px">
          <Icon name="width" size={14} /><NumField aria-label="Szerokość" defaultValue="400,0 mm" /><i /><NumField aria-label="Skala X" defaultValue="100,0" /><span>%</span>
          <Icon name="height" size={14} /><NumField aria-label="Wysokość" defaultValue="50,0 mm" /><i /><NumField aria-label="Skala Y" defaultValue="100,0" /><span>%</span>
        </Pair>
        <Tool $w={22} aria-label="lock"><Icon name="lock" size={12} /></Tool>
        <Sep />
        <Tool $w={20} aria-label="rotate"><Icon name="rotate" size={14} /></Tool>
        <AngleField $w={48} $h={23} aria-label="Kąt obrotu" defaultValue="0,0" />
        <Degree>°</Degree>
        <Sep />
        {tools(["mirrorH", "mirrorV"])}
        <Sep />
        {tools(["order"])}
        <Sep />
        {tools(["weld", "trim", "intersect", "simplify", "frontBack", "backFront", "boundary"])}
        <Sep />
        <Tool $w={22} aria-label="pen"><Icon name="pen" size={14} /></Tool>
        <Select value="0,2 mm" label="Szerokość konturu" w={78} />
        <Gap $w={2} /><Sep />
        {tools(["group", "ungroup", "ungroupAll"])}
        <Sep />
        {tools(["align"])}
        <Sep />
        <Gap $w={4} />
        {tools(["plus"])}
      </PropertyBar>

      <Main>
        <EdgePalette><EdgeList><Swatches /></EdgeList></EdgePalette>
        <Toolbox>
          <BoxTool aria-label="pick"><Pressed><Icon name="pick" /></Pressed><Flyout /></BoxTool>
          {toolbox.map((t, i) =>
            t === "-" ? <BoxRule key={i} /> : (
              <BoxTool key={i} aria-label={t[0]}><Icon name={t[0]} />{t[1] && <Flyout />}</BoxTool>
            ),
          )}
          <AddTool aria-label="plus"><Icon name="plus" /></AddTool>
        </Toolbox>

        <Document>
          <TabRow>
            <DocTab>Beznazwy-1</DocTab>
            <DocTab $add aria-label="Nowy dokument">
              <svg width="13" height="11" viewBox="0 0 13 11"><path d="M6.500 0v11M1 5.500h11" stroke="#aaa" strokeWidth="2" /></svg>
            </DocTab>
          </TabRow>
          <Workspace>
            <Corner><Icon name="anchor" size={12} /></Corner>
            <HorizontalRuler />
            <VerticalRuler />
            <Drawing />
            <VScroll>
              <ScrollButton aria-label="W górę"><Icon name="chevU" /></ScrollButton>
              <Thumb />
              <ScrollButton aria-label="W dół"><Icon name="chevD" /></ScrollButton>
            </VScroll>
            <PageBar>
              <PageNav>
                <NavButton $w={15} aria-label="Dodaj stronę przed"><Icon name="addPage" size={14} /></NavButton>
                <NavButton $w={19} aria-label="Pierwsza"><Icon name="first" size={14} /></NavButton>
                <NavButton $w={16} aria-label="Poprzednia"><Icon name="prev" size={14} /></NavButton>
                <PageCount>1 z 1</PageCount>
                <NavButton $w={16} aria-label="Następna"><Icon name="next" size={14} /></NavButton>
                <NavButton $w={16} aria-label="Ostatnia"><Icon name="last" size={14} /></NavButton>
                <NavButton $w={16} aria-label="Dodaj stronę po"><Icon name="addPage" size={14} /></NavButton>
              </PageNav>
              <PageTab>
                Strona 1
                <svg width="8" height="17" viewBox="0 0 8 17">
                  <path d="M0 0h8v8z" fill={bg} />
                  <path d="M0 .5 7.500 8v9M0 .5h8" fill="none" stroke="#9a9a9a" />
                </svg>
              </PageTab>
              <PageRest><Dots /></PageRest>
              <HScroll>
                <ScrollButton aria-label="W lewo"><Icon name="chevL" size={14} /></ScrollButton>
                <Thumb />
                <ScrollButton aria-label="W prawo"><Icon name="chevR" size={14} /></ScrollButton>
              </HScroll>
            </PageBar>
            <ScrollButton aria-label="Nawigator"><Icon name="navigator" size={14} /></ScrollButton>
          </Workspace>
          <Tray>
            <Dots />
            <NavButton $w={18} aria-label="Opcje"><Icon name="play" /></NavButton>
            <NavButton $w={14} aria-label="Pobierz kolor"><Icon name="dropper" size={14} /></NavButton>
            <NavButton $w={16} aria-label="Przewiń w lewo"><Icon name="chevL" size={14} /></NavButton>
            <NoColor><Cross /></NoColor>
            <TrayHint>Przeciągnij kolory (lub obiekty) tutaj, aby przechować odpowiednie kolory w dokumencie</TrayHint>
            <NavButton $w={18} aria-label="Przewiń w prawo"><Icon name="chevR" size={14} /></NavButton>
            <NavButton $w={24} aria-label="Rozwiń"><Icon name="dblR" size={14} /></NavButton>
          </Tray>
        </Document>

        <Dock>
          <DockHead>
            <h2>Zrób krok i powtórz</h2>
            <NavButton $w={17} aria-label="Zwiń"><Icon name="skip" /></NavButton>
            <NavButton $w={19} aria-label="Zamknij"><Icon name="close" size={14} /></NavButton>
          </DockHead>
          <DockBody>
            <Form onSubmit={(e) => e.preventDefault()}>
              <Offset title="Ustawienia w poziomie" distance="0,0 mm" direction="Do prawej" />
              <Offset title="Ustawienia w pionie" distance="50,0 mm" direction="U góry" />
              <FieldRow $last>
                <FieldLabel $w={70} htmlFor="copies">Liczba kopii:</FieldLabel>
                <Spin id="copies" value="5" />
              </FieldRow>
              <Apply type="button">Zastosuj</Apply>
            </Form>
            <SideTabs>
              <SideTab><Icon name="manager" /><span>Menedżer obiektów</span></SideTab>
              <SideTab $active><Icon name="step" /><span>Zrób krok i powtórz</span></SideTab>
              <AddTool aria-label="Dodaj"><Icon name="plus" /></AddTool>
            </SideTabs>
          </DockBody>
        </Dock>
        <PaletteColumn>
          <PaletteTop>
            <Dots $row />
            <Icon name="play" />
            <Icon name="dropperOff" size={14} />
            <Icon name="chevU" />
          </PaletteTop>
          <SwatchList><Swatches /></SwatchList>
          <Icon name="chevD" />
          <Icon name="dblR" />
        </PaletteColumn>
      </Main>

      <StatusBar>
        <Coords>( 553,455; 134,451 )</Coords>
        <PlayBox aria-label="Opcje"><Icon name="play" size={12} /></PlayBox>
        <StatusText>{"Zaznaczonych obiektów:  8 na Warstwa 1"}</StatusText>
        <StatusCell $w={204}><Icon name="bucket" /><StatusSwatch $c="#fff"><Cross /></StatusSwatch>Brak</StatusCell>
        <StatusCell $w={219} $line><Icon name="nib" /><StatusSwatch $c="#000" />R:0 G:0 B:0 (#000000)</StatusCell>
      </StatusBar>
    </Shell>
  );
}
